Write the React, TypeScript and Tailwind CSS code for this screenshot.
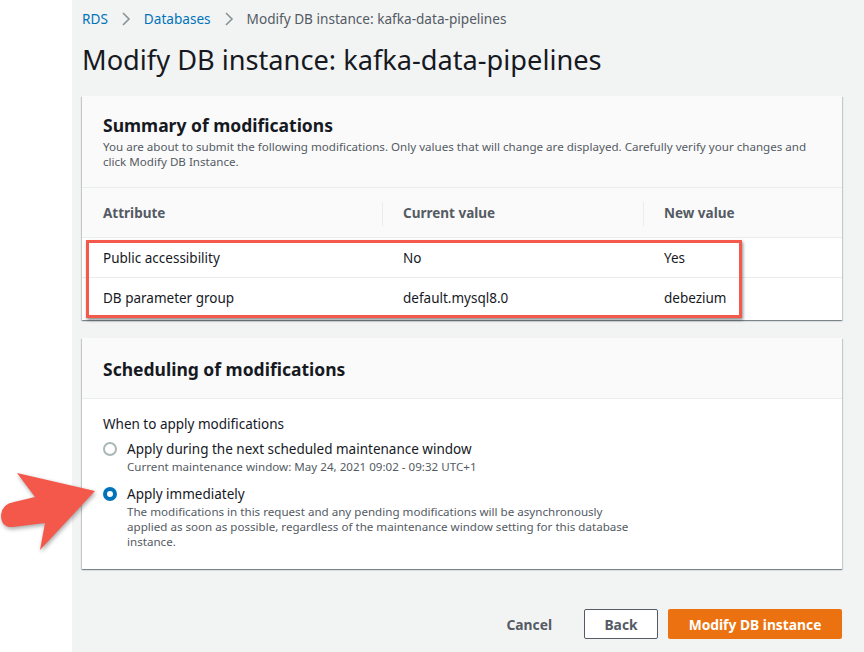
import React from 'react';

const font = { fontFamily: '"Noto Sans", "Open Sans", Arial, sans-serif' };

const Radio: React.FC<{ checked?: boolean }> = ({ checked }) =>
  checked ? (
    <div className="w-[14px] h-[14px] rounded-full border-[4px] border-[#0073bb] bg-white flex-shrink-0" />
  ) : (
    <div className="w-[14px] h-[14px] rounded-full border-2 border-[#aab7b8] bg-white flex-shrink-0" />
  );

const Chevron = () => (
  <svg className="mx-[13px]" width="10" height="14" viewBox="0 0 10 14" fill="none" stroke="#879596" strokeWidth="1.6">
    <path d="M2 1l6 6-6 6" />
  </svg>
);

const App: React.FC = () => {
  return (
    <div className="relative w-[864px] h-[652px] flex overflow-hidden text-[#16191f]" style={font}>
      <div className="w-[72px] bg-white flex-shrink-0" />
      <div className="flex-1 bg-[#f2f3f3] pl-[10px] pr-[22px]">
        {/* breadcrumb */}
        <div className="flex items-center h-[20px] mt-[9px] text-[13.6px]">
          <span className="text-[#0073bb]">RDS</span>
          <Chevron />
          <span className="text-[#0073bb]">Databases</span>
          <Chevron />
          <span className="text-[#545b64]">Modify DB instance: kafka-data-pipelines</span>
        </div>
        <h1 className="mt-[13px] text-[27.2px] leading-[36px] font-normal">Modify DB instance: kafka-data-pipelines</h1>

        {/* summary card */}
        <div className="relative mt-[18px] bg-white shadow-[0_1px_1px_0_rgba(0,28,36,0.3),1px_1px_1px_0_rgba(0,28,36,0.15),-1px_1px_1px_0_rgba(0,28,36,0.15)]">
          <div className="bg-[#fafafa] h-[92px] px-[21px] pt-[18px] border-b border-[#eaeded]">
            <h2 className="text-[17.5px] leading-[22px] font-bold">Summary of modifications</h2>
            <p className="mt-[3px] text-[11.6px] leading-[15px] text-[#545b64]">
              You are about to submit the following modifications. Only values that will change are displayed. Carefully verify your changes and click Modify DB Instance.
            </p>
          </div>
          <div className="flex items-center h-[50px] pt-[2px] bg-[#fafafa] border-b border-[#eaeded] text-[13.5px] font-bold text-[#545b64]">
            <div className="w-[300px] pl-[21px]">Attribute</div>
            <div className="w-px h-[24px] bg-[#eaeded]" />
            <div className="w-[260px] pl-[20px]">Current value</div>
            <div className="w-px h-[24px] bg-[#eaeded]" />
            <div className="flex-1 pl-[20px]">New value</div>
          </div>
          {[
            ['Public accessibility', 'No', 'Yes'],
            ['DB parameter group', 'default.mysql8.0', 'debezium'],
          ].map((r, i) => (
            <div key={i} className={`flex items-center h-[40px] pt-[1px] text-[13.5px] ${i === 0 ? 'border-b border-[#eaeded]' : ''}`}>
              <div className="w-[301px] pl-[21px]">{r[0]}</div>
              <div className="w-[261px] pl-[20px]">{r[1]}</div>
              <div className="flex-1 pl-[20px]">{r[2]}</div>
            </div>
          ))}
          <div className="h-[2px]" />
          {/* highlight */}
          <div className="absolute left-[4px] top-[144px] w-[656px] h-[78px] border-[3px] border-[#f35a4c] shadow-[1px_2px_3px_rgba(0,0,0,0.45)]" />
        </div>

        {/* scheduling card */}
        <div className="mt-[18px] bg-white shadow-[0_1px_1px_0_rgba(0,28,36,0.3),1px_1px_1px_0_rgba(0,28,36,0.15),-1px_1px_1px_0_rgba(0,28,36,0.15)]">
          <div className="bg-[#fafafa] h-[61px] pt-[1px] px-[21px] flex items-center border-b border-[#eaeded]">
            <h2 className="text-[17.5px] leading-[22px] font-bold">Scheduling of modifications</h2>
          </div>
          <div className="px-[21px] pt-[15px] pb-[20px] text-[13.5px]">
            <div className="leading-[20px]">When to apply modifications</div>
            <div className="flex gap-[10px] mt-[5px]">
              <div className="pt-[3px]"><Radio /></div>
              <div>
                <div className="leading-[20px]">Apply during the next scheduled maintenance window</div>
                <div className="text-[11.6px] leading-[15px] text-[#545b64]">Current maintenance window: May 24, 2021 09:02 - 09:32 UTC+1</div>
              </div>
            </div>
            <div className="flex gap-[10px] mt-[10px]">
              <div className="pt-[3px]"><Radio checked /></div>
              <div>
                <div className="leading-[20px]">Apply immediately</div>
                <div className="text-[11.6px] leading-[15px] text-[#545b64] w-[505px]">
                  The modifications in this request and any pending modifications will be asynchronously applied as soon as possible, regardless of the maintenance window setting for this database instance.
                </div>
              </div>
            </div>
          </div>
        </div>

        {/* actions */}
        <div className="flex justify-end items-center mt-[40px] text-[13.8px] font-bold">
          <span className="text-[#545b64] mr-[32px] pt-[2px]">Cancel</span>
          <button className="h-[30px] w-[74px] pt-[2px] border border-[#545b64] rounded-[2px] bg-white text-[#545b64] mr-[10px]">Back</button>
          <button className="h-[30px] w-[174px] pt-[2px] rounded-[2px] bg-[#ec7211] text-white">Modify DB instance</button>
        </div>
      </div>

      {/* red arrow */}
      <svg className="absolute left-0 top-[468px] drop-shadow-[1px_2px_2px_rgba(0,0,0,0.35)]" width="100" height="86" viewBox="0 468 100 86">
        <path
          d="M17 473 L95 491 L40 550 L45 523 L13 527 Q1 528 1 515 Q2 504 14 502 L35 497 Z"
          fill="#f4584a"
        />
      </svg>
    </div>
  );
};

export default App;
